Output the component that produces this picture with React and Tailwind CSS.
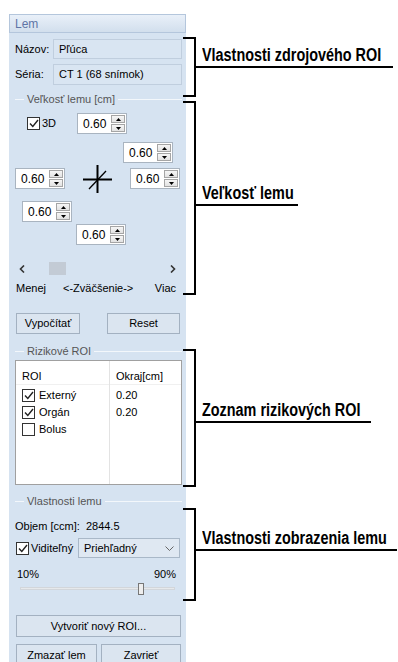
import React from 'react';

const ui = { fontFamily: '"Liberation Sans", Arial, sans-serif' };
const note = { fontFamily: '"Liberation Sans", Arial, sans-serif' };

function Check({ checked }) {
  return (
    <div className="w-[13px] h-[13px] border border-[#333] bg-white flex items-center justify-center shrink-0">
      {checked && (
        <svg width="10" height="9" viewBox="0 0 10 9">
          <path d="M1 4.5 L3.8 7.5 L9 1" fill="none" stroke="#222" strokeWidth="1.4" />
        </svg>
      )}
    </div>
  );
}

function Spin() {
  return (
    <div className="w-[50px] h-[21px] bg-white border border-[#a9b4c0] flex items-center">
      <span className="flex-1 pl-[5px] text-[12px] leading-none text-black">0.60</span>
      <div className="w-[14px] h-[17px] mr-[1px] flex flex-col gap-[1px]">
        <div className="h-[8px] border border-[#a5a5a5] bg-gradient-to-b from-[#f6f6f6] to-[#e2e2e2] flex items-center justify-center">
          <svg width="5" height="3" viewBox="0 0 5 3"><path d="M0 3 L2.5 0 L5 3 Z" fill="#000" /></svg>
        </div>
        <div className="h-[8px] border border-[#a5a5a5] bg-gradient-to-b from-[#f6f6f6] to-[#e2e2e2] flex items-center justify-center">
          <svg width="5" height="3" viewBox="0 0 5 3"><path d="M0 0 L2.5 3 L5 0 Z" fill="#000" /></svg>
        </div>
      </div>
    </div>
  );
}

function GroupHead({ label }) {
  return (
    <div className="h-[14px] flex items-center">
      <div className="w-[9px] h-px bg-[#f3f7fb]" />
      <span className="px-[3px] text-[11px] leading-none text-[#555]">{label}</span>
      <div className="flex-1 h-px bg-[#f3f7fb]" />
    </div>
  );
}

function Btn({ className, children }) {
  return (
    <div className={`border border-[#a3b1c1] bg-[#dbe5f0] flex items-center justify-center text-[11px] text-black ${className}`}>
      {children}
    </div>
  );
}

export default function App() {
  return (
    <div className="relative w-[398px] h-[662px] bg-white overflow-hidden" style={ui}>
      <div className="ml-[9px] mt-[14px] w-[177px] h-[660px] bg-[#d6e3f1]">
        <div className="h-[19px] border border-[#b4c6dc] bg-gradient-to-b from-[#e9f0f9] to-[#d2dfed] flex items-center pl-[5px] text-[12px] text-[#5f75a6]">
          Lem
        </div>
        <div className="pl-[6px] pr-[4px]">
          <div className="mt-[6px] flex items-center">
            <span className="w-[38px] text-[11px]">Názov:</span>
            <div className="flex-1 h-[20px] border border-[#c0cede] bg-[#d9e5f2] flex items-center pl-[5px] text-[11px]">Pľúca</div>
          </div>
          <div className="mt-[5px] flex items-center">
            <span className="w-[38px] text-[11px]">Séria:</span>
            <div className="flex-1 h-[21px] border border-[#c0cede] bg-[#d9e5f2] flex items-center pl-[5px] text-[11px]">CT 1 (68 snímok)</div>
          </div>

          <div className="mt-[7px]"><GroupHead label="Veľkosť lemu [cm]" /></div>

          <div className="mt-[7px] h-[21px] flex items-center pl-[12px]">
            <Check checked />
            <span className="ml-[2px] w-[35px] text-[11px]">3D</span>
            <Spin />
          </div>
          <div className="mt-[8px] pl-[108px]"><Spin /></div>
          <div className="mt-[5px] h-[21px] flex items-center">
            <Spin />
            <svg className="ml-[17px] shrink-0" width="30" height="30" viewBox="0 0 30 30">
              <path d="M1 15.5 H30" stroke="#000" strokeWidth="2" />
              <path d="M15.5 1 V29" stroke="#000" strokeWidth="2" />
              <path d="M7 25 L24 7" stroke="#000" strokeWidth="1.3" />
            </svg>
            <div className="ml-[18px]"><Spin /></div>
          </div>
          <div className="mt-[12px] pl-[7px]"><Spin /></div>
          <div className="mt-[2px] pl-[61px]"><Spin /></div>

          <div className="mt-[17px] h-[13px] flex items-center">
            <svg className="ml-[4px]" width="6" height="8" viewBox="0 0 6 8"><path d="M5 0.5 L1.5 4 L5 7.5" fill="none" stroke="#333" strokeWidth="1.6" /></svg>
            <div className="ml-[24px] w-[17px] h-[13px] bg-[#c3cbd5]" />
            <div className="flex-1" />
            <svg className="mr-[6px]" width="6" height="8" viewBox="0 0 6 8"><path d="M1 0.5 L4.5 4 L1 7.5" fill="none" stroke="#333" strokeWidth="1.6" /></svg>
          </div>

          <div className="mt-[6px] h-[14px] flex items-center text-[11px]">
            <span className="ml-[1px]">Menej</span>
            <span className="ml-[17px]">&lt;-Zväčšenie-&gt;</span>
            <span className="ml-auto mr-[6px]">Viac</span>
          </div>

          <div className="mt-[18px] flex">
            <Btn className="ml-[1px] w-[64px] h-[21px]">Vypočítať</Btn>
            <Btn className="ml-[27px] w-[73px] h-[21px]">Reset</Btn>
          </div>

          <div className="mt-[10px]"><GroupHead label="Rizikové ROI" /></div>

          <div className="mt-[2px] h-[125px] border border-[#a0a0a0] bg-white flex text-[11px]">
            <div className="w-[94px] border-r border-[#e3e3e3]">
              <div className="h-[24px] pt-[10px] pl-[6px] leading-none border-b border-[#f0f0f0]">ROI</div>
              <div className="pl-[6px] pt-[3px] flex flex-col gap-[3px]">
                <div className="flex items-center h-[14px]"><Check checked /><span className="ml-[4px]">Externý</span></div>
                <div className="flex items-center h-[14px]"><Check checked /><span className="ml-[4px]">Orgán</span></div>
                <div className="flex items-center h-[14px]"><Check /><span className="ml-[4px]">Bolus</span></div>
              </div>
            </div>
            <div className="flex-1">
              <div className="h-[24px] pt-[10px] pl-[6px] leading-none border-b border-[#f0f0f0]">Okraj[cm]</div>
              <div className="pl-[6px] pt-[3px] flex flex-col gap-[3px]">
                <div className="h-[14px] flex items-center">0.20</div>
                <div className="h-[14px] flex items-center">0.20</div>
              </div>
            </div>
          </div>

          <div className="mt-[9px]"><GroupHead label="Vlastnosti lemu" /></div>

          <div className="mt-[11px] h-[14px] flex items-center text-[11px]">Objem [ccm]:&nbsp; 2844.5</div>

          <div className="mt-[5px] h-[20px] flex items-center text-[11px]">
            <div className="ml-[1px]"><Check checked /></div>
            <span className="ml-[2px] w-[47px]">Viditeľný</span>
            <div className="flex-1 mr-[2px] h-[20px] border border-[#a9b8c8] bg-[#dfe8f2] flex items-center pl-[5px]">
              <span className="flex-1">Priehľadný</span>
              <svg className="mr-[5px]" width="9" height="5" viewBox="0 0 9 5"><path d="M0.5 0.5 L4.5 4.5 L8.5 0.5" fill="none" stroke="#666" strokeWidth="1" /></svg>
            </div>
          </div>

          <div className="mt-[9px] h-[14px] flex items-center text-[11px]">
            <span className="ml-[2px]">10%</span>
            <span className="ml-auto mr-[6px]">90%</span>
          </div>

          <div className="mt-[1px] h-[12px] flex items-center pl-[5px] pr-[7px]">
            <div className="relative flex-1 h-[3px] bg-[#e6e9ec] border border-[#d2d6db]">
              <div className="absolute left-[117px] -top-[5px] w-[6px] h-[12px] bg-[#eeeeee] border border-[#777]" />
            </div>
          </div>

          <Btn className="mt-[21px] ml-[1px] mr-[1px] h-[22px]">Vytvoriť nový ROI...</Btn>

          <div className="mt-[7px] flex gap-[4px] ml-[1px] mr-[1px]">
            <Btn className="w-[81px] h-[22px]">Zmazať lem</Btn>
            <Btn className="flex-1 h-[22px]">Zavrieť</Btn>
          </div>
        </div>
      </div>

      {/* callouts */}
      <div className="absolute left-[183px] top-[37px] w-[13px] h-[60px] border-y-2 border-r-2 border-black" />
      <div className="absolute left-[194px] top-[66px] w-[199px] h-[2px] bg-black" />
      <div className="absolute left-[202px] top-[45px] text-[18px] leading-[20px] font-bold text-black whitespace-nowrap origin-left scale-x-[0.8]" style={note}>Vlastnosti zdrojového ROI</div>

      <div className="absolute left-[183px] top-[101px] w-[13px] h-[194px] border-y-2 border-r-2 border-black" />
      <div className="absolute left-[194px] top-[204px] w-[104px] h-[2px] bg-black" />
      <div className="absolute left-[202px] top-[183px] text-[18px] leading-[20px] font-bold text-black whitespace-nowrap origin-left scale-x-[0.8]" style={note}>Veľkosť lemu</div>

      <div className="absolute left-[183px] top-[349px] w-[13px] h-[138px] border-y-2 border-r-2 border-black" />
      <div className="absolute left-[194px] top-[421px] w-[177px] h-[2px] bg-black" />
      <div className="absolute left-[202px] top-[400px] text-[18px] leading-[20px] font-bold text-black whitespace-nowrap origin-left scale-x-[0.8]" style={note}>Zoznam rizikových ROI</div>

      <div className="absolute left-[183px] top-[508px] w-[13px] h-[93px] border-y-2 border-r-2 border-black" />
      <div className="absolute left-[194px] top-[549px] w-[203px] h-[2px] bg-black" />
      <div className="absolute left-[202px] top-[528px] text-[18px] leading-[20px] font-bold text-black whitespace-nowrap origin-left scale-x-[0.8]" style={note}>Vlastnosti zobrazenia lemu</div>
    </div>
  );
}
